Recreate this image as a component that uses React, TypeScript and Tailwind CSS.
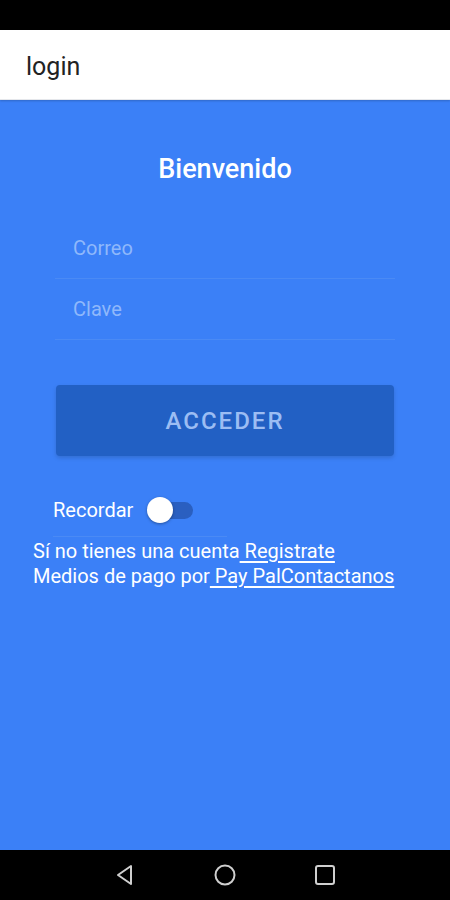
import React from "react";

export default function App() {
  return (
    <div className="w-[450px] h-[900px] flex flex-col bg-[#3b80f7] overflow-hidden" style={{ fontFamily: "Roboto, 'Noto Sans', sans-serif" }}>
      <div className="h-[30px] bg-black shrink-0" />
      <div className="h-[70px] bg-white shrink-0 flex items-center px-[26px] pt-[4px] border-b border-[#e5e7eb] shadow-[0_1px_2px_rgba(0,0,0,0.2)]">
        <span className="text-[25px] text-[#222] leading-none">login</span>
      </div>
      <div className="flex-1 flex flex-col">
        <div className="mt-[53px] text-center text-white text-[27px] font-medium leading-[32px]">Bienvenido</div>
        <div className="mx-[55px] mt-[33px]">
          <div className="h-[61px] border-b border-[#4a8af5] flex items-center px-[18px] text-[20px] text-[#8fb8fb]">Correo</div>
          <div className="h-[61px] border-b border-[#4a8af5] flex items-center px-[18px] text-[20px] text-[#8fb8fb]">Clave</div>
        </div>
        <div className="mx-[56px] mt-[45px] h-[71px] rounded-[4px] bg-[#2260c4] shadow-[0_2px_4px_rgba(0,0,0,0.15)] flex items-center justify-center text-[24px] font-medium tracking-[2px] text-[#9cbdf3]">ACCEDER</div>
        <div className="mt-[41px] ml-[53px] flex items-center h-[26px]">
          <span className="text-[20px] text-white">Recordar</span>
          <div className="relative ml-[14px] w-[46px] h-[26px] flex items-center">
            <div className="ml-[4px] w-[42px] h-[17px] rounded-full bg-[#2a5fc0]" />
            <div className="absolute left-0 top-0 w-[26px] h-[26px] rounded-full bg-white shadow-[0_1px_3px_rgba(0,0,0,0.35)]" />
          </div>
        </div>
        <div className="mt-[13px] ml-[53px] w-[174px] border-b border-[#4a8af5]" />
        <div className="ml-[33px] mt-[2px] text-[20px] text-white leading-[25px]">
          <div>Sí no tienes una cuenta<span className="underline underline-offset-[3px]"> Registrate</span></div>
          <div>Medios de pago por<span className="underline underline-offset-[3px]"> Pay PalContactanos</span></div>
        </div>
      </div>
      <div className="h-[50px] bg-black shrink-0 flex items-center justify-center gap-[74px]">
        <svg width="26" height="26" viewBox="0 0 26 26" fill="none" stroke="#cfcfcf" strokeWidth="2" strokeLinejoin="round">
          <path d="M19 4 L19 22 L6 13 Z" />
        </svg>
        <svg width="26" height="26" viewBox="0 0 26 26" fill="none" stroke="#cfcfcf" strokeWidth="2">
          <circle cx="13" cy="13" r="9.5" />
        </svg>
        <svg width="26" height="26" viewBox="0 0 26 26" fill="none" stroke="#cfcfcf" strokeWidth="2">
          <rect x="4" y="4" width="18" height="18" rx="2" />
        </svg>
      </div>
    </div>
  );
}
